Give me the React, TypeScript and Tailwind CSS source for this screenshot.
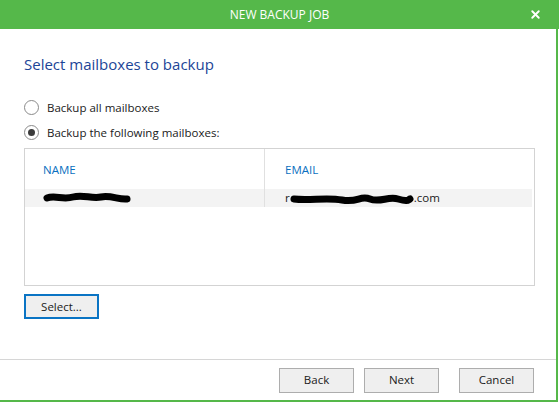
import { X } from "lucide-react";

const GREEN = "bg-[#55b84a]";

function Radio({ checked, label }: { checked?: boolean; label: string }) {
  return (
    <label className="flex h-[25px] items-center gap-[8px]">
      <span className="flex h-[15px] w-[15px] items-center justify-center rounded-full border border-[#8a8a8a] bg-white">
        {checked && <span className="h-[7px] w-[7px] rounded-full bg-[#3c3c3c]" />}
      </span>
      <span className="text-[11.5px] text-[#1a1a1a]">{label}</span>
    </label>
  );
}

function Button({ children, focused }: { children: React.ReactNode; focused?: boolean }) {
  return (
    <button
      className={`flex h-[25px] w-[75px] items-center justify-center bg-[#efefef] text-[11.5px] text-[#1a1a1a] ${
        focused ? "border-2 border-[#0a74c4]" : "border border-[#adadad]"
      }`}
    >
      {children}
    </button>
  );
}

// redacted text is drawn as a marker scribble
function Scribble({ width, d }: { width: number; d: string }) {
  return (
    <svg width={width} height="14" viewBox={`0 0 ${width} 14`} className="shrink-0">
      <path d={d} fill="none" stroke="#000" strokeWidth="7" strokeLinecap="round" strokeLinejoin="round" />
    </svg>
  );
}

export default function App() {
  return (
    <div className="h-[402px] w-[560px] overflow-hidden bg-white font-['Open_Sans',sans-serif]">
      <div className="flex h-[402px] w-[559px] flex-col">
        {/* Title bar */}
        <div className={`relative flex h-[29px] shrink-0 items-center justify-center ${GREEN}`}>
          <span className="text-[12px] text-white">NEW BACKUP JOB</span>
          <X className="absolute right-[17px] top-[8px] h-[13px] w-[13px] text-white" strokeWidth={3.5} />
        </div>

        <div className="mr-[1px] flex flex-1 flex-col border-b-2 border-r-2 border-[#55b84a]">
          <div className="flex flex-1 flex-col px-[24px] pt-[25px]">
            <h1 className="text-[15px] leading-[20px] text-[#1c4597]">Select mailboxes to backup</h1>

            <div className="mt-[21px] flex flex-col">
              <Radio label="Backup all mailboxes" />
              <Radio checked label="Backup the following mailboxes:" />
            </div>

            {/* Mailbox list */}
            <div className="mt-[3px] h-[138px] w-[511px] border border-[#d3d3d3]">
              <div className="flex w-[507px]">
                <div className="flex w-[240px] flex-col border-r border-[#e0e0e0]">
                  <div className="flex h-[40px] items-center pl-[18px] pt-[2px] text-[11.5px] text-[#0a70c0]">NAME</div>
                  <div className="flex h-[18px] items-center bg-[#f3f3f3] pl-[18px]">
                    <Scribble width={88} d="M4 7 C12 4 20 9 30 6 S48 8 58 6 S76 9 84 8" />
                  </div>
                </div>
                <div className="flex flex-1 flex-col">
                  <div className="flex h-[40px] items-center pl-[20px] pt-[2px] text-[11.5px] text-[#0a70c0]">EMAIL</div>
                  <div className="flex h-[18px] items-center bg-[#f3f3f3] pl-[20px] text-[11.5px] text-[#1a1a1a]">
                    <span>r</span>
                    <Scribble width={124} d="M4 8 C20 10 36 6 52 9 S70 4 80 8 S98 5 108 8 S118 9 120 8" />
                    <span>.com</span>
                  </div>
                </div>
              </div>
            </div>

            <div className="mt-[8px]">
              <Button focused>Select...</Button>
            </div>
          </div>

          {/* Footer */}
          <div className="flex h-[41px] shrink-0 items-center justify-end border-t border-[#d6d6d6] pr-[22px]">
            <div className="flex items-center">
              <Button>Back</Button>
              <div className="ml-[10px]">
                <Button>Next</Button>
              </div>
              <div className="ml-[20px]">
                <Button>Cancel</Button>
              </div>
            </div>
          </div>
        </div>
      </div>
    </div>
  );
}
